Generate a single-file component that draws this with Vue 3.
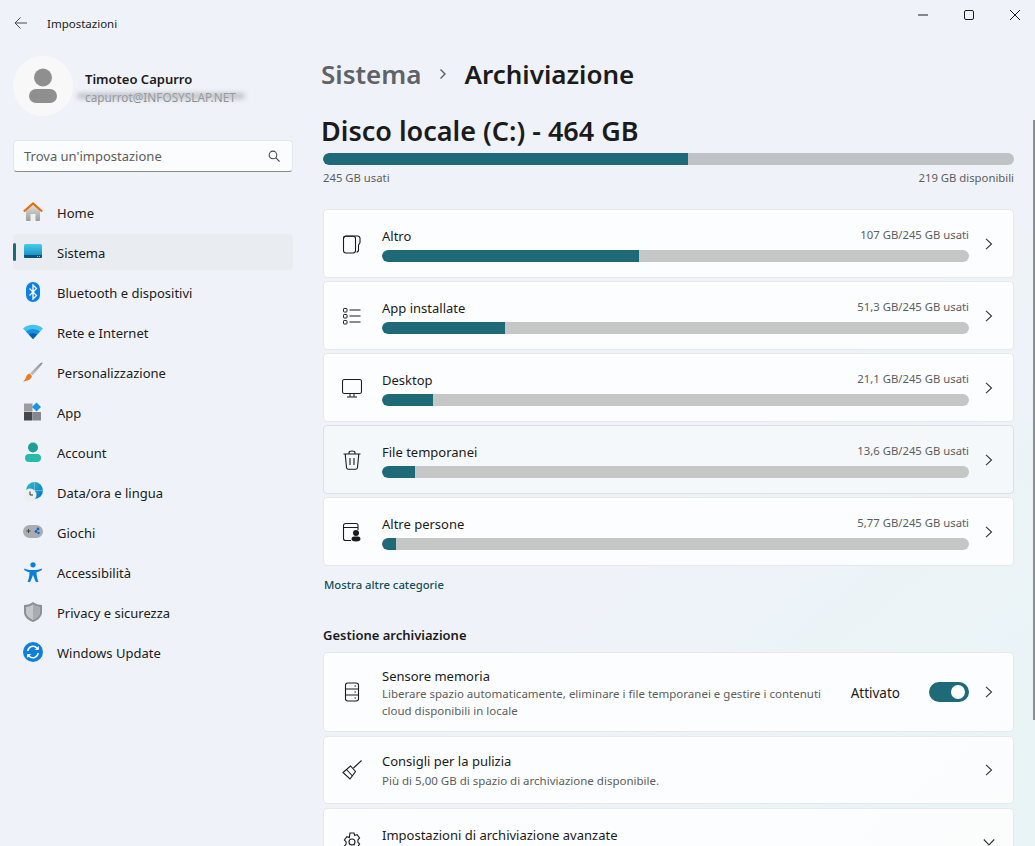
<script setup>
const navItems = [
  { key: 'home', label: 'Home' },
  { key: 'system', label: 'Sistema', active: true },
  { key: 'bluetooth', label: 'Bluetooth e dispositivi' },
  { key: 'network', label: 'Rete e Internet' },
  { key: 'brush', label: 'Personalizzazione' },
  { key: 'apps', label: 'App' },
  { key: 'account', label: 'Account' },
  { key: 'time', label: 'Data/ora e lingua' },
  { key: 'games', label: 'Giochi' },
  { key: 'access', label: 'Accessibilità' },
  { key: 'privacy', label: 'Privacy e sicurezza' },
  { key: 'update', label: 'Windows Update' }
]

// larghezze ricavate dalla barra: 587px di traccia
const categories = [
  { key: 'other', title: 'Altro', used: '107 GB/245 GB usati', fill: 43.8 },
  { key: 'apps', title: 'App installate', used: '51,3 GB/245 GB usati', fill: 21 },
  { key: 'desktop', title: 'Desktop', used: '21,1 GB/245 GB usati', fill: 8.7 },
  { key: 'trash', title: 'File temporanei', used: '13,6 GB/245 GB usati', fill: 5.6, hover: true },
  { key: 'people', title: 'Altre persone', used: '5,77 GB/245 GB usati', fill: 2.4 }
]
</script>

<template>
  <div class="window">
    <!-- barra del titolo -->
    <header class="titlebar">
      <svg class="back" viewBox="0 0 16 16" width="16" height="16">
        <path d="M14 8H2M7.500 2.500 2 8l5.500 5.500" fill="none" stroke="#4a4a4a" stroke-width="1" />
      </svg>
      <span class="app-title">Impostazioni</span>
      <div class="win-controls">
        <svg viewBox="0 0 12 12" width="12" height="12"><path d="M1 6h10" stroke="#1b1b1b" stroke-width="1" /></svg>
        <svg viewBox="0 0 12 12" width="12" height="12"><rect x="1.500" y="1.500" width="9" height="9" rx="1.500" fill="none" stroke="#1b1b1b" stroke-width="1" /></svg>
        <svg viewBox="0 0 12 12" width="12" height="12"><path d="M1 1l10 10M11 1 1 11" stroke="#1b1b1b" stroke-width="1" /></svg>
      </div>
    </header>

    <div class="columns">
      <!-- colonna sinistra -->
      <aside class="sidebar">
        <div class="profile">
          <div class="avatar">
            <svg viewBox="0 0 30 36" width="30" height="36">
              <circle cx="15" cy="9.500" r="9" fill="#8f8f8f" />
              <rect x="1" y="21" width="28" height="14" rx="7" fill="#8f8f8f" />
            </svg>
          </div>
          <div class="profile-text">
            <div class="profile-name">Timoteo Capurro</div>
            <div class="profile-mail">
              capurrot@INFOSYSLAP.NET
              <span class="smudge"></span>
            </div>
          </div>
        </div>

        <div class="search">
          <span>Trova un'impostazione</span>
          <svg viewBox="0 0 14 14" width="12" height="12">
            <circle cx="5.800" cy="5.800" r="4.500" fill="none" stroke="#444" stroke-width="1.200" />
            <path d="M9 9l4.500 4.500" stroke="#444" stroke-width="1.300" />
          </svg>
        </div>

        <nav class="nav">
          <div v-for="item in navItems" :key="item.key" class="nav-item" :class="{ active: item.active }">
            <svg class="nav-icon" viewBox="0 0 20 20" width="20" height="20">
              <template v-if="item.key === 'home'">
                <path d="M3 8l7-6 7 6v10a1 1 0 0 1-1 1H4a1 1 0 0 1-1-1z" fill="url(#homeWall)" />
                <rect x="7.500" y="12" width="5" height="7" fill="#eef0f2" />
                <path d="M.8 9.500 10 1.500l9.200 8" fill="none" stroke="#e26f0c" stroke-width="2.200" />
              </template>
              <template v-else-if="item.key === 'system'">
                <rect x="1" y="2" width="18" height="14" rx="1.500" fill="url(#sysScreen)" />
                <path d="M1 13h18v1.500a1.500 1.500 0 0 1-1.500 1.500h-15A1.500 1.500 0 0 1 1 14.500z" fill="#0d4f80" />
                <path d="M14 14.500h3" stroke="#7fc4e0" stroke-width="1" stroke-dasharray="1 1" />
              </template>
              <template v-else-if="item.key === 'bluetooth'">
                <rect x="3" y="0" width="14" height="20" rx="7" fill="#0a7fe6" />
                <path d="M6.500 6.500l7 7L10 17V3l3.500 3.500-7 7" fill="none" stroke="#fff" stroke-width="1.300" />
              </template>
              <template v-else-if="item.key === 'network'">
                <path d="M0 6.500C5.500 1.500 14.500 1.500 20 6.500L10 17z" fill="#43c3f0" />
                <path d="M3 9.500C7 6 13 6 17 9.500L10 17z" fill="#1590e2" />
                <path d="M6 12.500C8.300 10.700 11.700 10.700 14 12.500L10 17z" fill="#0b5cad" />
              </template>
              <template v-else-if="item.key === 'brush'">
                <path d="M19 .5c.6.300.6 1 .2 1.600L9.500 13.500 7 11.200 17.500 1z" fill="url(#brushHandle)" />
                <path d="M6.500 11.500 9 14c-.8 3-3.500 5-9 5.500 2-1.500 2.500-2.500 3-4.500.5-1.700 2-3 3.500-3.500z" fill="#ee7a1c" />
              </template>
              <template v-else-if="item.key === 'apps'">
                <rect x="1" y="1.500" width="8.500" height="8" fill="#9a9ca0" />
                <rect x="1" y="10" width="8.500" height="8.500" fill="#45474a" />
                <rect x="10" y="10" width="8" height="8.500" fill="#85888c" />
                <path d="M13.500.5 18 5l-4.500 4.500L9 5z" fill="#1b94e8" />
              </template>
              <template v-else-if="item.key === 'account'">
                <circle cx="10" cy="5.500" r="5" fill="#1f9f95" />
                <rect x="2" y="12" width="16" height="8" rx="4" fill="#25bba8" />
              </template>
              <template v-else-if="item.key === 'time'">
                <circle cx="11.500" cy="8.500" r="8.500" fill="url(#globe)" />
                <path d="M3 8.500h17M11.500 0v17" stroke="#7fd4e8" stroke-width=".6" />
                <circle cx="7" cy="13" r="6.500" fill="#eceef0" />
                <path d="M7 9.500V13h3" fill="none" stroke="#333" stroke-width="1" />
              </template>
              <template v-else-if="item.key === 'games'">
                <rect x="0" y="3" width="20" height="13" rx="6.500" fill="#a9adb2" />
                <path d="M3.500 9h4M5.500 7v4" stroke="#444" stroke-width="1" />
                <circle cx="15" cy="7" r="1.400" fill="#1268c4" />
                <circle cx="13" cy="9.500" r="1.400" fill="#1268c4" />
                <circle cx="15.500" cy="11" r="1.200" fill="#1268c4" />
              </template>
              <template v-else-if="item.key === 'access'">
                <circle cx="10" cy="2.800" r="2.600" fill="#0b7ddb" />
                <path d="M1.500 6.500c2.500 1 4.500 1.500 8.500 1.500s6-.5 8.500-1.500l.5 1.500c-2 1.200-4 2-5.500 2.300 0 3 .5 6.500 2 9.700h-2.500C11.700 17.500 10.700 15 10 13c-.7 2-1.700 4.500-3 7H4.500c1.500-3.200 2-6.700 2-9.700C5 10 3 9.200 1 8z" fill="#0b7ddb" />
              </template>
              <template v-else-if="item.key === 'privacy'">
                <path d="M10 0c2.500 2 5.500 3 9 3v7c0 4.500-3.500 8-9 10C4.500 18 1 14.500 1 10V3c3.500 0 6.500-1 9-3z" fill="#8b9096" />
                <path d="M10 2.500c2 1.500 4.500 2.200 7 2.500v5c0 3.300-2.800 6-7 8-4.200-2-7-4.700-7-8V5c2.500-.3 5-1 7-2.500z" fill="#c3c7cb" />
                <path d="M10 2.500v15.500c4.200-2 7-4.700 7-8V5c-2.500-.3-5-1-7-2.500z" fill="#a8adb2" />
              </template>
              <template v-else-if="item.key === 'update'">
                <circle cx="10" cy="10" r="10" fill="#0f7fdc" />
                <path d="M4.800 9a5.300 5.300 0 0 1 9.200-3l1 1.200M15.200 11a5.300 5.300 0 0 1-9.200 3l-1-1.200" fill="none" stroke="#fff" stroke-width="1.500" />
                <path d="M15.800 4v4h-4zM4.200 16v-4h4z" fill="#fff" />
              </template>
            </svg>
            <span>{{ item.label }}</span>
          </div>
        </nav>

        <!-- gradienti condivisi -->
        <svg width="0" height="0" class="defs">
          <defs>
            <linearGradient id="homeWall" x1="0" y1="0" x2="0" y2="1">
              <stop offset="0" stop-color="#e2e2e2" />
              <stop offset="1" stop-color="#9c9c9c" />
            </linearGradient>
            <linearGradient id="sysScreen" x1="0" y1="0" x2="0" y2="1">
              <stop offset="0" stop-color="#45cdea" />
              <stop offset="1" stop-color="#1183bd" />
            </linearGradient>
            <linearGradient id="brushHandle" x1="1" y1="0" x2="0" y2="1">
              <stop offset="0" stop-color="#8b8f94" />
              <stop offset="1" stop-color="#c4c7ca" />
            </linearGradient>
            <linearGradient id="globe" x1="0" y1="0" x2="1" y2="1">
              <stop offset="0" stop-color="#2cc0c8" />
              <stop offset="1" stop-color="#0e6fc0" />
            </linearGradient>
          </defs>
        </svg>
      </aside>

      <!-- contenuto -->
      <main class="content">
        <div class="breadcrumb">
          <span class="crumb-parent">Sistema</span>
          <svg viewBox="0 0 10 12" width="10" height="12">
            <path d="M2.500 1.500 7 6l-4.500 4.500" fill="none" stroke="#5d5d5d" stroke-width="1.400" />
          </svg>
          <span class="crumb-current">Archiviazione</span>
        </div>

        <h1 class="disk-title">Disco locale (C:) - 464 GB</h1>
        <div class="bar disk-bar"><div class="bar-fill" style="width: 52.8%"></div></div>
        <div class="disk-info">
          <span>245 GB usati</span>
          <span>219 GB disponibili</span>
        </div>

        <div class="cat-list">
          <div v-for="cat in categories" :key="cat.key" class="card cat-card" :class="{ hover: cat.hover }">
            <svg class="card-icon" viewBox="0 0 20 20" width="20" height="20">
              <template v-if="cat.key === 'other'">
                <path d="M1.500 4.500c0-1.500 1-2.500 2.500-2.500h11.500c1.500 0 2.500 1 2.500 2.500v4c0 1.200-1.500 1.500-1.500 3v4.500c0 1-.7 2-2 2" fill="none" stroke="#1b1b1b" stroke-width="1.100" />
                <path d="M1.500 4.500c0-1.500 1-2.300 2.500-2.300h7c1.500 0 2.500 1 2.500 2.300v12c0 1.500-1 2.500-2.500 2.500H4c-1.500 0-2.500-1-2.500-2.500z" fill="none" stroke="#1b1b1b" stroke-width="1.100" />
              </template>
              <template v-else-if="cat.key === 'apps'">
                <rect x="1.500" y="2.500" width="3.500" height="3.500" rx=".7" fill="none" stroke="#1b1b1b" stroke-width="1" />
                <rect x="1.500" y="8.500" width="3.500" height="3.500" rx=".7" fill="none" stroke="#1b1b1b" stroke-width="1" />
                <rect x="1.500" y="14.500" width="3.500" height="3.500" rx=".7" fill="none" stroke="#1b1b1b" stroke-width="1" />
                <path d="M7.500 4h11M7.500 10h11M7.500 16h11" stroke="#1b1b1b" stroke-width="1" />
              </template>
              <template v-else-if="cat.key === 'desktop'">
                <rect x=".5" y="1.500" width="19" height="14" rx="1.800" fill="none" stroke="#1b1b1b" stroke-width="1.100" />
                <path d="M8 15.500V19M12 15.500V19M5 19h10" fill="none" stroke="#1b1b1b" stroke-width="1" />
              </template>
              <template v-else-if="cat.key === 'trash'">
                <path d="M1.500 4h17M7 4V2.800C7 1.800 8 1 10 1s3 .8 3 1.800V4M3.200 4l1.300 13.500c.1 1 1 1.700 2 1.700h7c1 0 1.900-.7 2-1.700L16.800 4" fill="none" stroke="#1b1b1b" stroke-width="1.100" />
                <path d="M8 8v7M12 8v7" stroke="#1b1b1b" stroke-width="1.100" />
              </template>
              <template v-else>
                <path d="M9 18.500H3.500a2 2 0 0 1-2-2v-13a2 2 0 0 1 2-2h10.500a2 2 0 0 1 2 2V8M1.500 5.500H16" fill="none" stroke="#1b1b1b" stroke-width="1.100" />
                <circle cx="14" cy="11" r="3" fill="#1b1b1b" />
                <path d="M9.500 17c0-1.600 1-2.500 2.500-2.500h4c1.500 0 2.500.9 2.500 2.500 0 1.700-2 2.500-4.500 2.500s-4.500-.8-4.500-2.500z" fill="#1b1b1b" />
              </template>
            </svg>
            <div class="card-body">
              <div class="cat-head">
                <span class="card-title">{{ cat.title }}</span>
                <span class="cat-used">{{ cat.used }}</span>
              </div>
              <div class="bar"><div class="bar-fill" :style="{ width: cat.fill + '%' }"></div></div>
            </div>
            <svg class="chevron" viewBox="0 0 12 12" width="12" height="12">
              <path d="M3 .8 8.500 6 3 11.200" fill="none" stroke="#333" stroke-width="1.100" />
            </svg>
          </div>
        </div>

        <div class="more-link">Mostra altre categorie</div>
        <h2 class="section-title">Gestione archiviazione</h2>

        <div class="manage-list">
          <div class="card sense-card">
            <svg class="card-icon" viewBox="0 0 20 20" width="20" height="20">
              <rect x="3.500" y="1" width="13" height="18" rx="2.200" fill="none" stroke="#1b1b1b" stroke-width="1.100" />
              <path d="M3.500 7h13M3.500 13h13" stroke="#1b1b1b" stroke-width="1.100" />
              <path d="M12.500 4h1.500M12.500 10h1.500M12.500 16h1.500" stroke="#1b1b1b" stroke-width="1" />
            </svg>
            <div class="card-body text-body">
              <div class="card-title">Sensore memoria</div>
              <div class="card-desc">Liberare spazio automaticamente, eliminare i file temporanei e gestire i contenuti cloud disponibili in locale</div>
            </div>
            <span class="toggle-label">Attivato</span>
            <div class="toggle"><span class="knob"></span></div>
            <svg class="chevron" viewBox="0 0 12 12" width="12" height="12">
              <path d="M3 .8 8.500 6 3 11.200" fill="none" stroke="#333" stroke-width="1.100" />
            </svg>
          </div>

          <div class="card tips-card">
            <svg class="card-icon" viewBox="0 0 20 20" width="20" height="20">
              <path d="M19.500 .5 11.500 8M1 12.500 8.500 6l5 5.500L8 19z" fill="none" stroke="#1b1b1b" stroke-width="1.100" />
              <path d="M4.500 9.500l6 6.500" stroke="#1b1b1b" stroke-width="1.100" />
            </svg>
            <div class="card-body text-body">
              <div class="card-title">Consigli per la pulizia</div>
              <div class="card-desc">Più di 5,00 GB di spazio di archiviazione disponibile.</div>
            </div>
            <svg class="chevron" viewBox="0 0 12 12" width="12" height="12">
              <path d="M3 .8 8.500 6 3 11.200" fill="none" stroke="#333" stroke-width="1.100" />
            </svg>
          </div>

          <div class="card adv-card">
            <svg class="card-icon" viewBox="0 0 20 20" width="20" height="20">
              <path d="M8 1h4l.7 2.600 2.400-1 2.500 3.300-1.700 2 0 2.200 1.700 2-2.500 3.300-2.400-1L12 19H8l-.7-2.600-2.400 1-2.500-3.300 1.700-2 0-2.200-1.700-2 2.500-3.300 2.400 1z" fill="none" stroke="#1b1b1b" stroke-width="1.100" />
              <circle cx="10" cy="10" r="3" fill="none" stroke="#1b1b1b" stroke-width="1.100" />
            </svg>
            <div class="card-body text-body">
              <div class="card-title">Impostazioni di archiviazione avanzate</div>
            </div>
            <svg class="chevron" viewBox="0 0 12 12" width="12" height="12">
              <path d="M.8 3.500 6 9l5.200-5.500" fill="none" stroke="#333" stroke-width="1.100" />
            </svg>
          </div>
        </div>
      </main>
    </div>

    <div class="scrollbar"></div>
  </div>
</template>

<style>
html,
body {
  margin: 0;
  overflow: hidden;
}
</style>

<style scoped>
.window {
  position: relative;
  width: 1035px;
  height: 846px;
  overflow: hidden;
  font-family: 'Noto Sans', 'Open Sans', sans-serif;
  font-size: 13px;
  color: #1b1b1b;
  background: linear-gradient(140deg, #eff3f9 0%, #eff3f9 62%, #e8f4f6 100%);
}

/* barra del titolo */
.titlebar {
  display: flex;
  align-items: center;
  height: 46px;
  padding-left: 13px;
}

.back {
  margin-right: 18px;
}

.app-title {
  font-size: 11.500px;
}

.win-controls {
  display: flex;
  gap: 34px;
  margin-left: auto;
  margin-right: 14px;
  margin-top: -16px;
}

.columns {
  display: flex;
}

/* colonna sinistra */
.sidebar {
  width: 280px;
  margin-left: 13px;
  flex-shrink: 0;
}

.profile {
  display: flex;
  align-items: center;
  gap: 12px;
  margin-top: 10px;
}

.avatar {
  display: flex;
  align-items: center;
  justify-content: center;
  width: 60px;
  height: 60px;
  border-radius: 50%;
  background: #f8f8f9;
}

.profile-text {
  padding-top: 4px;
}

.profile-name {
  font-size: 13px;
  font-weight: 600;
  line-height: 18px;
}

.profile-mail {
  position: relative;
  font-size: 11.800px;
  line-height: 18px;
  color: #8a8a8a;
}

.smudge {
  position: absolute;
  left: -8px;
  top: 5px;
  width: 168px;
  height: 6px;
  border-radius: 3px;
  background: rgba(170, 174, 180, 0.7);
  filter: blur(2.500px);
}

.search {
  display: flex;
  align-items: center;
  justify-content: space-between;
  box-sizing: border-box;
  height: 32px;
  margin-top: 24px;
  padding: 0 12px 0 10px;
  background: #fbfcfe;
  border: 1px solid #e3e6ea;
  border-bottom: 1px solid #8a8d90;
  border-radius: 4px;
  font-size: 13px;
  color: #5d5d5d;
}

.nav {
  display: flex;
  flex-direction: column;
  gap: 4px;
  margin-top: 22px;
}

.nav-item {
  position: relative;
  display: flex;
  align-items: center;
  gap: 14px;
  height: 36px;
  padding-left: 10px;
  border-radius: 4px;
  font-size: 13px;
  color: #202020;
}

.nav-item span {
  padding-top: 2px;
}

.nav-item.active {
  background: #e9ecf1;
}

.nav-item.active::before {
  content: '';
  position: absolute;
  left: 0;
  top: 9px;
  width: 3px;
  height: 18px;
  border-radius: 2px;
  background: #1e6a78;
}

.defs {
  position: absolute;
}

/* contenuto */
.content {
  width: 691px;
  margin-left: 30px;
}

.breadcrumb {
  display: flex;
  align-items: center;
  height: 40px;
  margin-left: -2px;
  font-size: 26px;
  font-weight: 600;
  margin-top: 8px;
}

.crumb-parent {
  color: #5f6266;
}

.breadcrumb svg {
  margin: 0 16px 0 17px;
}

.disk-title {
  margin: 20px 0 0 -2px;
  font-size: 27px;
  font-weight: 600;
  line-height: 34px;
}

.bar {
  height: 12px;
  border-radius: 6px;
  background: #c5c7c7;
  overflow: hidden;
}

.bar-fill {
  height: 100%;
  background: #1e6a78;
  border-radius: 6px 0 0 6px;
}

.disk-bar {
  margin-top: 5px;
  background: #bfc3c6;
}

.disk-info {
  display: flex;
  justify-content: space-between;
  margin-top: 5px;
  font-size: 11.300px;
  line-height: 16px;
  color: #5d5d5d;
}

.cat-list {
  display: flex;
  flex-direction: column;
  gap: 3px;
  margin-top: 23px;
}

.card {
  display: flex;
  box-sizing: border-box;
  background: rgba(255, 255, 255, 0.8);
  border: 1px solid #e5e9ed;
  border-radius: 4px;
}

.card.hover {
  background: #f5f8fa;
  border-color: #dcdfe3;
}

.cat-card {
  height: 69px;
  align-items: center;
}

.card-icon {
  flex-shrink: 0;
  margin: 0 20px 0 18px;
}

.card-body {
  flex: 1;
  min-width: 0;
}

.cat-card .card-body {
  align-self: flex-start;
  padding-top: 17px;
}

.cat-head {
  display: flex;
  justify-content: space-between;
  align-items: flex-start;
  height: 18px;
  margin-bottom: 5px;
}

.card-title {
  font-size: 13px;
  line-height: 18px;
}

.cat-used {
  font-size: 11.300px;
  line-height: 16px;
  color: #5d5d5d;
}

.chevron {
  flex-shrink: 0;
  margin: 0 18px 0 14px;
}

.more-link {
  margin: 10px 0 0 1px;
  font-size: 11.300px;
  font-weight: 500;
  line-height: 18px;
  color: #0f4f5c;
}

.section-title {
  margin: 32px 0 0;
  font-size: 13px;
  font-weight: 600;
  line-height: 18px;
}

.manage-list {
  display: flex;
  flex-direction: column;
  gap: 4px;
  margin-top: 8px;
}

.sense-card {
  height: 80px;
  align-items: center;
}

.sense-card .text-body {
  padding-top: 1px;
}

.tips-card {
  height: 68px;
  align-items: center;
}

.tips-card .card-title {
  margin-bottom: 2px;
}

.adv-card {
  height: 70px;
  align-items: flex-start;
}

.adv-card .card-icon {
  margin-top: 23px;
}

.adv-card .chevron {
  margin-top: 27px;
}

.adv-card .text-body {
  padding-top: 17px;
}

.card-desc {
  font-size: 11.500px;
  line-height: 17px;
  color: #5d5d5d;
}

.sense-card .card-desc {
  max-width: 450px;
}

.toggle-label {
  margin-right: 29px;
  padding-top: 2px;
  font-size: 13.500px;
}

.toggle {
  position: relative;
  flex-shrink: 0;
  width: 40px;
  height: 20px;
  border-radius: 10px;
  background: #1e6a78;
}

.knob {
  position: absolute;
  right: 4px;
  top: 3px;
  width: 14px;
  height: 14px;
  border-radius: 50%;
  background: #fff;
}

.scrollbar {
  position: absolute;
  right: 0;
  top: 120px;
  width: 2px;
  height: 600px;
  background: #8a8f93;
}
</style>
